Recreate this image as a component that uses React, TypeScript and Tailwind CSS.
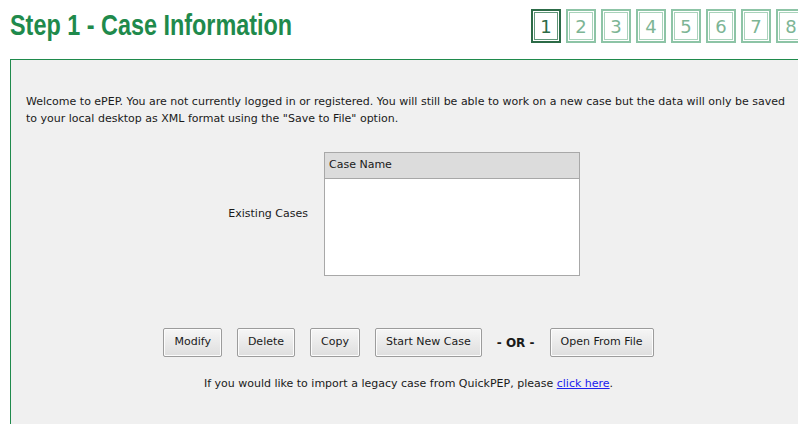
import React from "react";

const steps = [1, 2, 3, 4, 5, 6, 7, 8];

const actions = ["Modify", "Delete", "Copy", "Start New Case"];

const Button: React.FC<{ label: string }> = ({ label }) => (
  <button
    type="button"
    className="h-[29px] px-[10px] border border-[#9c9c9c] rounded-[2px] bg-gradient-to-b from-[#f6f6f6] to-[#dedede] shadow-[inset_0_0_0_1px_#fcfcfc] text-[11px] text-[#1a1a1a]"
  >
    {label}
  </button>
);

const App: React.FC = () => {
  return (
    <div className="w-[798px] h-[424px] overflow-hidden bg-white font-['DejaVu_Sans',sans-serif]">
      {/* Titre + étapes */}
      <div className="h-[59px] flex items-start">
        <h1 className="ml-[10px] mt-[8px] inline-block origin-left scale-x-[0.78] whitespace-nowrap text-[30px] leading-[34px] font-bold text-[#1f8a4c] font-['Liberation_Sans',sans-serif]">
          Step 1 - Case Information
        </h1>
        <div className="ml-auto mt-[9px] flex gap-[5px] -mr-[8px]">
          {steps.map((n) => (
            <div
              key={n}
              className={
                n === 1
                  ? "w-[30px] h-[34px] border-2 border-[#2c6b47] shadow-[inset_0_0_0_1px_#fff,inset_0_0_0_2px_#5f9678] flex items-center justify-center text-[18px] text-[#2c6b47] bg-white"
                  : "w-[30px] h-[34px] border-2 border-[#8dc4a6] shadow-[inset_0_0_0_1px_#fff,inset_0_0_0_2px_#a9d3bb] flex items-center justify-center text-[18px] text-[#7db595] bg-white"
              }
            >
              {n}
            </div>
          ))}
        </div>
      </div>

      {/* Panneau principal */}
      <div className="ml-[10px] w-[796px] h-[400px] border-t border-l border-[#1f8a4c] bg-[#f0f0f0] text-[11px] text-[#1a1a1a]">
        <p className="pt-[33px] pl-[15px] pr-[10px] leading-[17px]">
          Welcome to ePEP. You are not currently logged in or registered. You will still be able to work on a new case but the data will only be saved to your local desktop as XML format using the "Save to File" option.
        </p>

        <div className="mt-[25px] flex items-center">
          <div className="w-[297px] text-right">Existing Cases</div>
          <div className="ml-[16px] w-[256px] h-[124px] border border-[#a8a8a8] bg-white">
            <div className="h-[26px] bg-[#dcdcdc] border-b border-[#a8a8a8] pl-[4px] leading-[24px]">
              Case Name
            </div>
          </div>
        </div>

        <div className="mt-[52px] flex items-center justify-center">
          <div className="flex gap-[15px]">
            {actions.map((a) => (
              <Button key={a} label={a} />
            ))}
          </div>
          <span className="mx-[15px] font-bold text-[12px]">- OR -</span>
          <Button label="Open From File" />
        </div>

        <p className="mt-[19px] text-center">
          If you would like to import a legacy case from QuickPEP, please{" "}
          <a href="#" className="text-[#2020ee] underline">
            click here
          </a>
          .
        </p>
      </div>
    </div>
  );
};

export default App;
